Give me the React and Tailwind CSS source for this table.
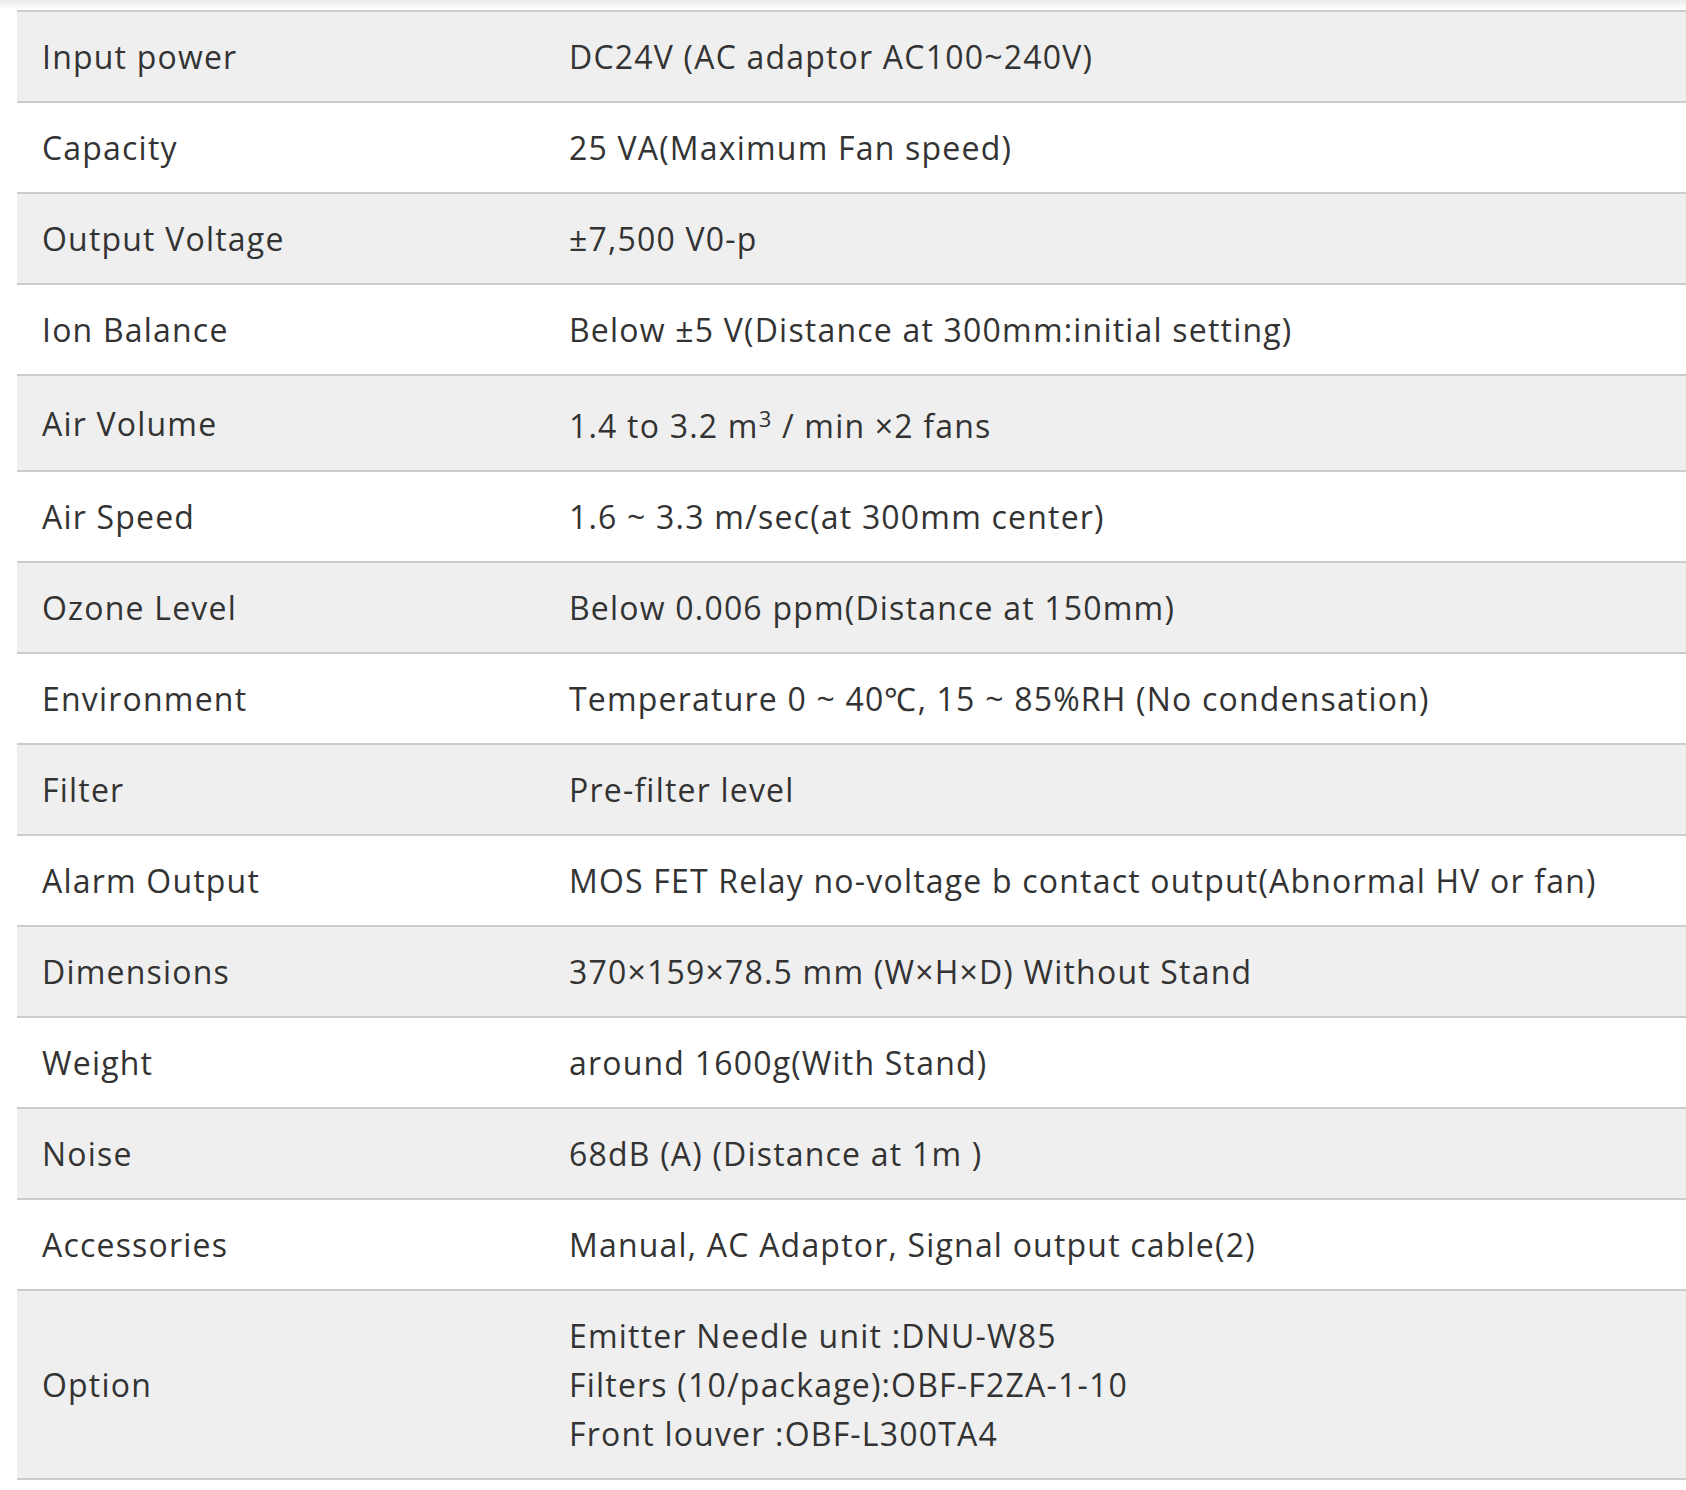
const specs = [
  ['Input power', 'DC24V (AC adaptor AC100~240V)'],
  ['Capacity', '25 VA(Maximum Fan speed)'],
  ['Output Voltage', '±7,500 V0-p'],
  ['Ion Balance', 'Below ±5 V(Distance at 300mm:initial setting)'],
  ['Air Volume', <>1.4 to 3.2 m<sup className="text-[22px]">3</sup> / min ×2 fans</>],
  ['Air Speed', '1.6 ~ 3.3 m/sec(at 300mm center)'],
  ['Ozone Level', 'Below 0.006 ppm(Distance at 150mm)'],
  ['Environment', 'Temperature 0 ~ 40℃, 15 ~ 85%RH (No condensation)'],
  ['Filter', 'Pre-filter level'],
  ['Alarm Output', 'MOS FET Relay no-voltage b contact output(Abnormal HV or fan)'],
  ['Dimensions', '370×159×78.5 mm (W×H×D) Without Stand'],
  ['Weight', 'around 1600g(With Stand)'],
  ['Noise', '68dB (A) (Distance at 1m )'],
  ['Accessories', 'Manual, AC Adaptor, Signal output cable(2)'],
  [
    'Option',
    <>
      Emitter Needle unit :DNU-W85
      <br />
      Filters (10/package):OBF-F2ZA-1-10
      <br />
      Front louver :OBF-L300TA4
    </>,
  ],
]

export default function App() {
  return (
    <div className="w-[1686px] h-[1490px] overflow-hidden bg-white text-[#333333]" style={{ fontFamily: '"Open Sans", Lato, sans-serif' }}>
      <div className="h-[10px] bg-gradient-to-b from-[#ececec] to-white" />
      <div className="ml-[17px] w-[1700px] border-t-2 border-[#cccccc]">
        {specs.map(([label, value], i) => (
          <div
            key={label}
            className={`flex items-center border-b-2 border-[#cccccc] text-[32px] leading-[49px] tracking-[1.2px] ${i % 2 === 0 ? 'bg-[#efefef]' : 'bg-white'}`}
          >
            <div className="w-[530px] shrink-0 pl-[25px] pr-[22px] py-5">{label}</div>
            <div className={`flex-1 px-[22px] pb-5 ${label === 'Air Volume' ? 'pt-[25px]' : 'pt-5'}`}>{value}</div>
          </div>
        ))}
      </div>
    </div>
  )
}
